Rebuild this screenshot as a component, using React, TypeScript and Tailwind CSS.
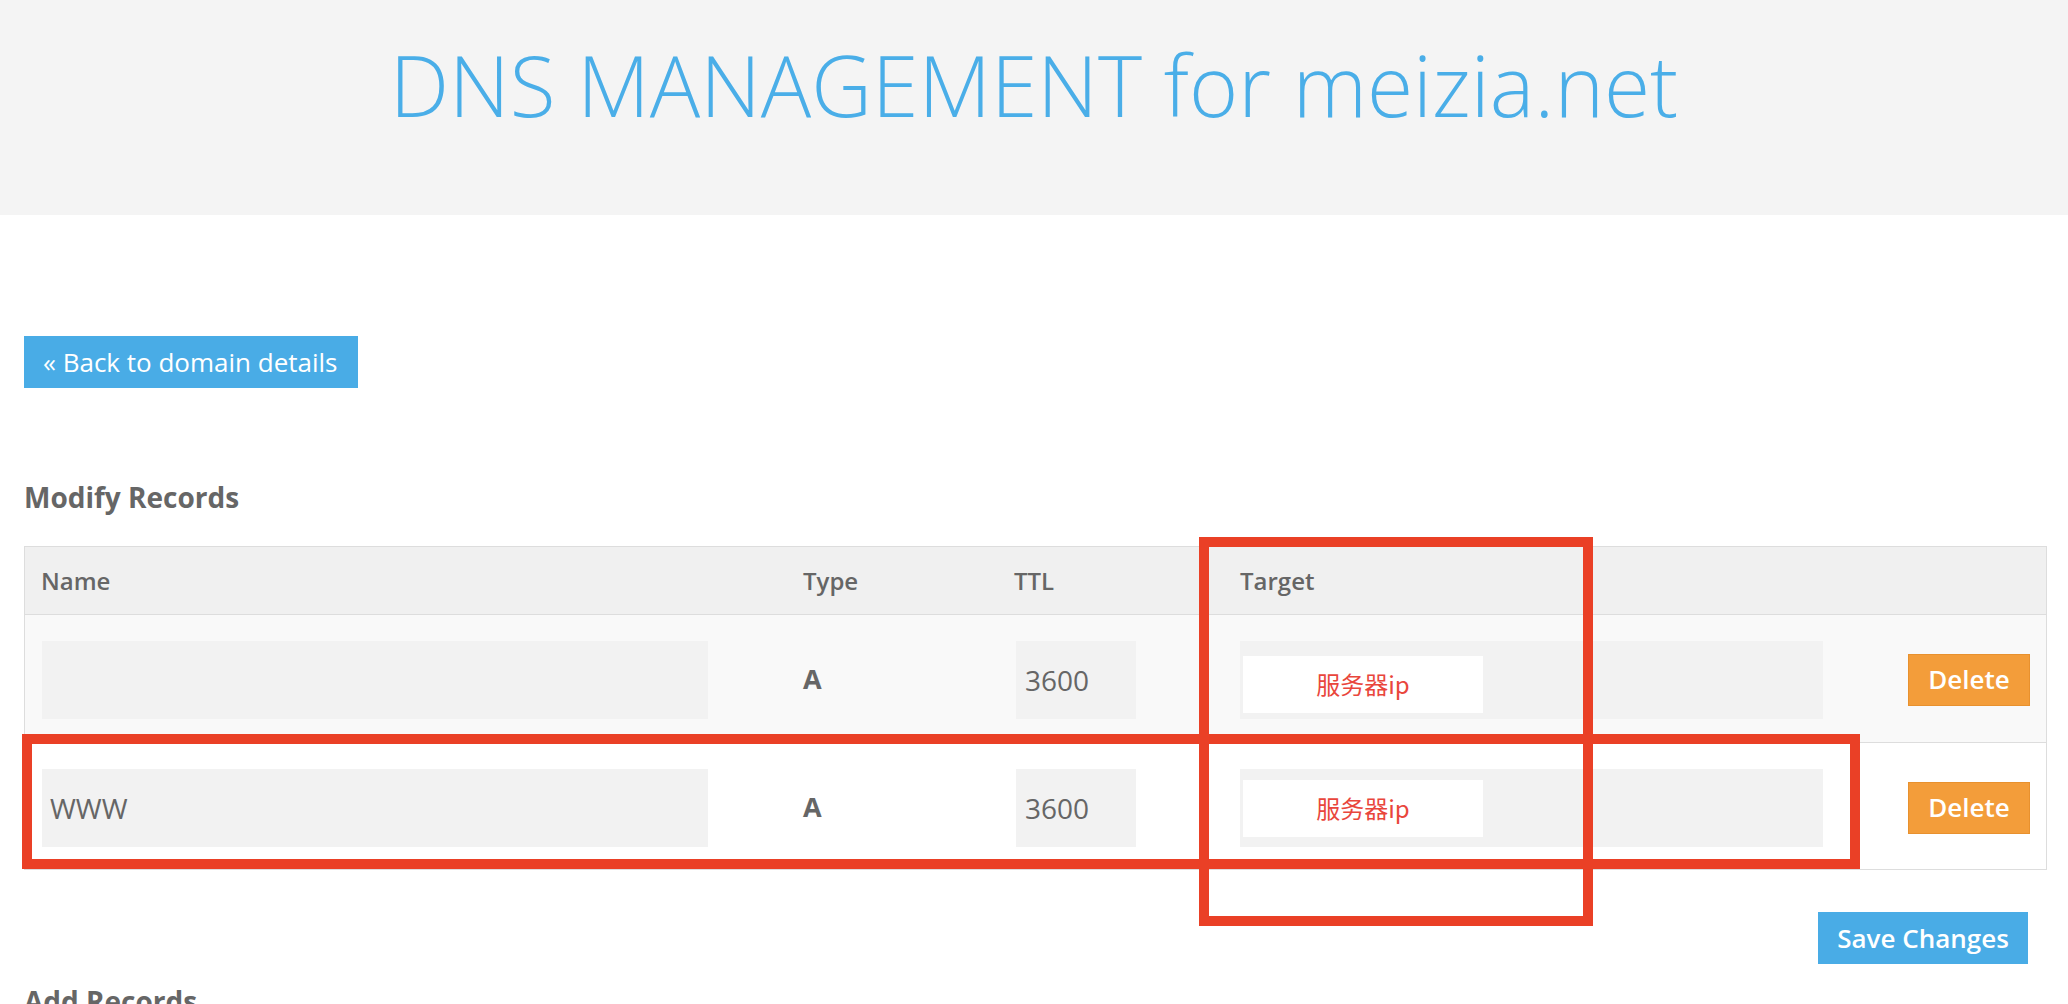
import React from "react";

const records = [
    { name: "", type: "A", ttl: "3600", target: "服务器ip", offset: "top-[15px]", striped: true },
    { name: "WWW", type: "A", ttl: "3600", target: "服务器ip", offset: "top-[11px]", striped: false },
];

const App = () => {
    return (
        <div className="relative min-h-screen bg-white font-['Open_Sans',sans-serif] text-[#666]">
            <div className="h-[215px] bg-[#f4f4f4] pt-[43px]">
                <h1 className="text-center text-[84px] leading-none font-light text-[#4aaee8]">DNS MANAGEMENT for meizia.net</h1>
            </div>

            <div className="pl-[24px] pr-[21px]">
                <button className="mt-[121px] flex h-[52px] w-[334px] items-center bg-[#49ace6] px-[19px] text-[26px] text-white">
                    « Back to domain details
                </button>

                <h2 className="mt-[95px] text-[28px] leading-none font-bold text-[#666]">Modify Records</h2>

                <div className="mt-[35px] border border-[#ddd]">
                    <div className="grid h-[68px] grid-cols-[762px_211px_226px_620px_1fr] items-center border-b border-[#ddd] bg-[#f0f0f0] text-[24px] leading-none font-semibold">
                        <div className="pl-[16px]">Name</div>
                        <div className="pl-[16px]">Type</div>
                        <div className="pl-[16px]">TTL</div>
                        <div className="pl-[16px]">Target</div>
                        <div />
                    </div>
                    {records.map((r, i) => (
                        <div
                            key={i}
                            className={
                                "grid grid-cols-[762px_211px_226px_620px_1fr] items-center " +
                                (r.striped ? "h-[128px] border-b border-[#ddd] bg-[#f9f9f9] pt-[2px]" : "h-[126px] bg-white pt-[3px]")
                            }
                        >
                            <div className="pl-[17px]">
                                <div className="flex h-[78px] w-[666px] items-center bg-[#f2f2f2] pl-[8px] text-[28px]">{r.name}</div>
                            </div>
                            <div className="pl-[16px] text-[27px] font-bold">{r.type}</div>
                            <div className="pl-[18px]">
                                <div className="flex h-[78px] w-[120px] items-center bg-[#f2f2f2] pl-[9px] text-[28px]">{r.ttl}</div>
                            </div>
                            <div className="pl-[16px]">
                                <div className="relative h-[78px] w-[583px] bg-[#f2f2f2]">
                                    <div className={"absolute left-[3px] flex h-[57px] w-[240px] items-center justify-center bg-white text-[24px] text-[#e9463c] font-['Noto_Sans_CJK_SC',sans-serif] " + r.offset}>
                                        {r.target}
                                    </div>
                                </div>
                            </div>
                            <div className="flex justify-end pr-[16px]">
                                <button className="h-[52px] w-[122px] border border-[#e8912e] bg-[#f39d3a] text-[26px] font-semibold text-white">Delete</button>
                            </div>
                        </div>
                    ))}
                </div>

                <div className="mt-[42px] flex justify-end pr-[19px]">
                    <button className="h-[52px] w-[210px] bg-[#49ace6] text-[26px] font-semibold text-white">Save Changes</button>
                </div>

                <h2 className="mt-[23px] text-[28px] leading-none font-bold text-[#666]">Add Records</h2>
            </div>

            {/* red annotation boxes drawn over the screenshot */}
            <div className="pointer-events-none absolute left-[1199px] top-[537px] h-[389px] w-[394px] border-[10px] border-[#ea4026]" />
            <div className="pointer-events-none absolute left-[22px] top-[734px] h-[135px] w-[1838px] border-[10px] border-[#ea4026]" />
        </div>
    );
};

export default App;
